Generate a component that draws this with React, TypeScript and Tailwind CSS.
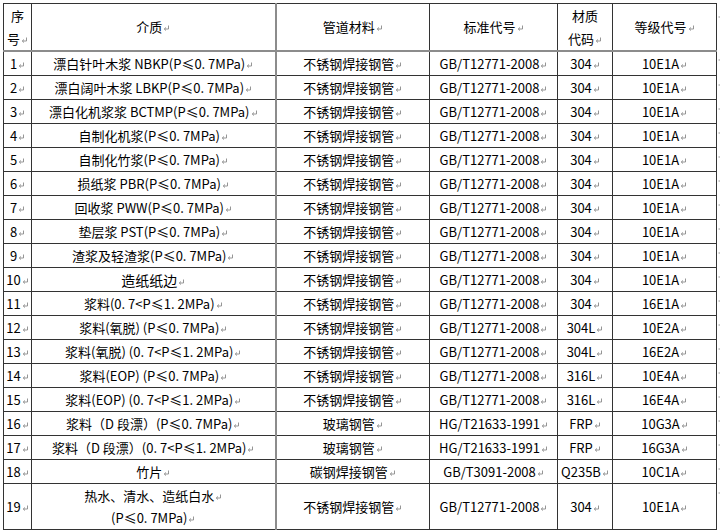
import React from "react";

type Row = [string, string | string[], string, string, string, string];

const rows: Row[] = [
  ["1", "漂白针叶木浆 NBKP(P≤0. 7MPa)", "不锈钢焊接钢管", "GB/T12771-2008", "304", "10E1A"],
  ["2", "漂白阔叶木浆 LBKP(P≤0. 7MPa)", "不锈钢焊接钢管", "GB/T12771-2008", "304", "10E1A"],
  ["3", "漂白化机浆浆 BCTMP(P≤0. 7MPa)", "不锈钢焊接钢管", "GB/T12771-2008", "304", "10E1A"],
  ["4", "自制化机浆(P≤0. 7MPa)", "不锈钢焊接钢管", "GB/T12771-2008", "304", "10E1A"],
  ["5", "自制化竹浆(P≤0. 7MPa)", "不锈钢焊接钢管", "GB/T12771-2008", "304", "10E1A"],
  ["6", "损纸浆 PBR(P≤0. 7MPa)", "不锈钢焊接钢管", "GB/T12771-2008", "304", "10E1A"],
  ["7", "回收浆 PWW(P≤0. 7MPa)", "不锈钢焊接钢管", "GB/T12771-2008", "304", "10E1A"],
  ["8", "垫层浆 PST(P≤0. 7MPa)", "不锈钢焊接钢管", "GB/T12771-2008", "304", "10E1A"],
  ["9", "渣浆及轻渣浆(P≤0. 7MPa)", "不锈钢焊接钢管", "GB/T12771-2008", "304", "10E1A"],
  ["10", "造纸纸边", "不锈钢焊接钢管", "GB/T12771-2008", "304", "10E1A"],
  ["11", "浆料(0. 7<P≤1. 2MPa)", "不锈钢焊接钢管", "GB/T12771-2008", "304", "16E1A"],
  ["12", "浆料(氧脱) (P≤0. 7MPa)", "不锈钢焊接钢管", "GB/T12771-2008", "304L", "10E2A"],
  ["13", "浆料(氧脱) (0. 7<P≤1. 2MPa)", "不锈钢焊接钢管", "GB/T12771-2008", "304L", "16E2A"],
  ["14", "浆料(EOP) (P≤0. 7MPa)", "不锈钢焊接钢管", "GB/T12771-2008", "316L", "10E4A"],
  ["15", "浆料(EOP) (0. 7<P≤1. 2MPa)", "不锈钢焊接钢管", "GB/T12771-2008", "316L", "16E4A"],
  ["16", "浆料（D 段漂）(P≤0. 7MPa)", "玻璃钢管", "HG/T21633-1991", "FRP", "10G3A"],
  ["17", "浆料（D 段漂）(0. 7<P≤1. 2MPa)", "玻璃钢管", "HG/T21633-1991", "FRP", "16G3A"],
  ["18", "竹片", "碳钢焊接钢管", "GB/T3091-2008", "Q235B", "10C1A"],
  ["19", ["热水、清水、造纸白水", "(P≤0. 7MPa)"], "不锈钢焊接钢管", "GB/T12771-2008", "304", "10E1A"],
];

function Mark() {
  return (
    <svg width="7" height="7" viewBox="0 0 7 7" className="inline-block ml-[1px] align-baseline">
      <path d="M5.5 0.5 V4 H1.5 M3 2.5 L1.2 4 L3 5.5" fill="none" stroke="#8a8a8a" strokeWidth="0.9" />
    </svg>
  );
}

function EndMark() {
  return (
    <svg width="4" height="6" viewBox="0 0 4 6" className="block">
      <path d="M3.5 0 V3 M0.5 3 H4" fill="none" stroke="#9a9a9a" strokeWidth="1" />
    </svg>
  );
}

const td = "border border-[#333] text-center align-middle p-0 whitespace-nowrap font-normal";
const hd = "border-b-2 border-b-[#8c8c8c]";

function Box({ h, children, big }: { h: string; children: React.ReactNode; big?: boolean }) {
  return (
    <div className={`flex flex-col items-center justify-center overflow-hidden ${h} ${big ? "text-[14px]" : ""}`}>
      {children}
    </div>
  );
}

export default function App() {
  return (
    <div className="w-[720px] h-[531px] overflow-hidden bg-white pt-[3px] pl-[3px] font-['Noto_Sans_CJK_SC',sans-serif] text-[13px] leading-[20px] text-black">
      <table className="table-fixed border-collapse w-[717px]">
        <colgroup>
          <col className="w-[28px]" />
          <col className="w-[244px]" />
          <col className="w-[154px]" />
          <col className="w-[128px]" />
          <col className="w-[55px]" />
          <col className="w-[104px]" />
          <col className="w-[4px]" />
        </colgroup>
        <thead>
          <tr>
            <th className={`${td} ${hd}`}>
              <Box h="h-[46px]">
                <span className="leading-[23px]">序</span>
                <span className="leading-[23px]">
                  号<Mark />
                </span>
              </Box>
            </th>
            <th className={`${td} ${hd} border-r-2 border-r-[#8c8c8c]`}>
              <Box h="h-[46px]">
                <span>
                  介质<Mark />
                </span>
              </Box>
            </th>
            <th className={`${td} ${hd}`}>
              <Box h="h-[46px]">
                <span>
                  管道材料<Mark />
                </span>
              </Box>
            </th>
            <th className={`${td} ${hd}`}>
              <Box h="h-[46px]">
                <span>
                  标准代号<Mark />
                </span>
              </Box>
            </th>
            <th className={`${td} ${hd}`}>
              <Box h="h-[46px]">
                <span className="leading-[23px]">材质</span>
                <span className="leading-[23px]">
                  代码<Mark />
                </span>
              </Box>
            </th>
            <th className={`${td} ${hd}`}>
              <Box h="h-[46px]">
                <span>
                  等级代号<Mark />
                </span>
              </Box>
            </th>
            <th className="p-0 align-top">
              <div className="pl-[1px] pt-[10px]">
                <EndMark />
              </div>
            </th>
          </tr>
        </thead>
        <tbody>
          {rows.map((r) => {
            const h = r[0] === "19" ? "h-[45px]" : "h-[23px]";
            return (
              <tr key={r[0]}>
                <td className={td}>
                  <Box h={h}>
                    <span>
                      {r[0]}
                      <Mark />
                    </span>
                  </Box>
                </td>
                <td className={`${td} border-r-2 border-r-[#8c8c8c]`}>
                  {Array.isArray(r[1]) ? (
                    <Box h={h}>
                      <span className="leading-[22px]">
                        {r[1][0]}
                        <Mark />
                      </span>
                      <span className="leading-[22px]">
                        {r[1][1]}
                        <Mark />
                      </span>
                    </Box>
                  ) : (
                    <Box h={h} big={r[0] === "10"}>
                      <span>
                        {r[1]}
                        <Mark />
                      </span>
                    </Box>
                  )}
                </td>
                {[r[2], r[3], r[4], r[5]].map((c, i) => (
                  <td key={i} className={td}>
                    <Box h={h}>
                      <span>
                        {c}
                        <Mark />
                      </span>
                    </Box>
                  </td>
                ))}
                <td className="p-0 align-top">
                  <div className="pl-[1px] pt-[6px]">
                    <EndMark />
                  </div>
                </td>
              </tr>
            );
          })}
        </tbody>
      </table>
    </div>
  );
}
